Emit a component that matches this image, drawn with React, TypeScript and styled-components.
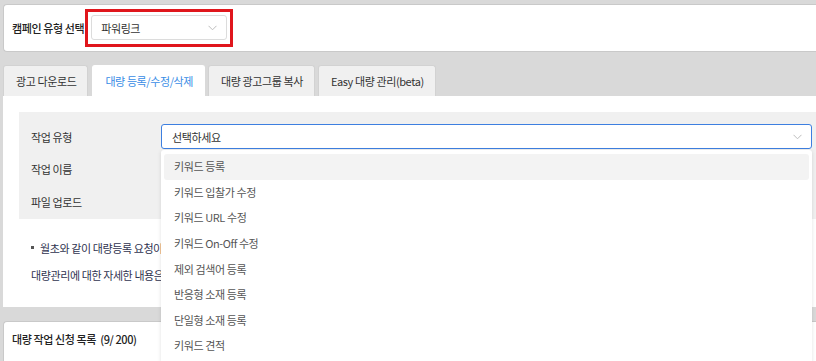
import React, { useState } from 'react'
import styled, { createGlobalStyle } from 'styled-components'

const GlobalStyle = createGlobalStyle`
  body {
    margin: 0;
    background: #d9d9d9;
    font-family: "Noto Sans CJK KR", "Noto Sans", sans-serif;
    color: #333;
    font-size: 11px;
    letter-spacing: -0.4px;
  }
  * { box-sizing: border-box; }
`

const JOB_TYPES = [
	'키워드 등록',
	'키워드 입찰가 수정',
	'키워드 URL 수정',
	'키워드 On-Off 수정',
	'제외 검색어 등록',
	'반응형 소재 등록',
	'단일형 소재 등록',
	'키워드 견적',
]

const TABS = ['광고 다운로드', '대량 등록/수정/삭제', '대량 광고그룹 복사', 'Easy 대량 관리(beta)']

const Page = styled.div`
  padding: 4px 0 0 3px;
  height: 361px;
  overflow: hidden;
`

const Card = styled.div`
  background: #fff;
  border: 1px solid #c9c9c9;
  border-right: none;
  border-radius: 4px 0 0 4px;
`

const TopCard = styled(Card)`
  height: 48px;
  display: flex;
  align-items: center;
  padding-left: 8px;
  gap: 1px;
`

const Label = styled.span`
  font-weight: 500;
  color: #222;
`

const Highlight = styled.div`
  border: 3px solid #e0161c;
  padding: 3px 3px;
  width: 148px;
  height: 38px;
`

const SelectBox = styled.div<{ $focused?: boolean }>`
  height: 25px;
  border: 1px solid ${p => (p.$focused ? '#3d7fe0' : '#dcdcdc')};
  border-radius: 3px;
  background: #fff;
  display: flex;
  align-items: center;
  justify-content: space-between;
  padding: 0 9px 0 ${p => (p.$focused ? 10 : 9)}px;
  color: #333;
`

const Chevron = () => (
	<svg width="9" height="6" viewBox="0 0 9 6">
		<path d="M0.5 0.8 L4.5 4.8 L8.5 0.8" fill="none" stroke="#bdbdbd" strokeWidth="1" />
	</svg>
)

const TabBar = styled.div`
  display: flex;
  gap: 3px;
  margin-top: 13px;
  height: 31px;
`

const Tab = styled.div<{ $active?: boolean }>`
  padding: 0 11px 0 12px;
  margin-left: ${p => (p.$active ? 1 : 0)}px;
  display: flex;
  align-items: center;
  border-radius: 3px 3px 0 0;
  border: 1px solid ${p => (p.$active ? '#fff' : '#d2d2d2')};
  border-bottom: none;
  background: ${p => (p.$active ? '#fff' : '#f0f0f0')};
  color: ${p => (p.$active ? '#3a8de6' : '#333')};
`

const Panel = styled.div`
  background: #fff;
  padding: 16px 0 0 16px;
  height: 211px;
`

const Form = styled.div`
  background: #f0f0f0;
  padding: 12px 4px 0 12px;
  height: 107px;
`

const Row = styled.div`
  display: flex;
  align-items: center;
  height: 33px;
  &:first-child { height: 25px; margin-bottom: 3px; }
`

const RowLabel = styled.div`
  width: 130px;
  color: #333;
`

const Field = styled.div`
  flex: 1;
  position: relative;
`

const Menu = styled.ul`
  position: absolute;
  left: 0;
  right: 0;
  top: 26px;
  margin: 0;
  padding: 4px 3px;
  list-style: none;
  background: #fff;
  box-shadow: 0 1px 4px rgba(0, 0, 0, 0.12);
  border-radius: 3px;
  z-index: 10;
`

const MenuItem = styled.li<{ $hover?: boolean }>`
  height: 25.6px;
  display: flex;
  align-items: center;
  padding: 0 0 1px 10px;
  border-radius: 3px;
  color: #555;
  background: ${p => (p.$hover ? '#f3f3f3' : 'transparent')};
`

const Notes = styled.div`
  padding: 15px 0 0 9px;
  color: #2f3350;
`

const Note = styled.div<{ $bullet?: boolean }>`
  height: 27px;
  display: flex;
  align-items: center;
  gap: 6px;
  padding-left: 3px;
  &::before {
    content: '';
    display: ${p => (p.$bullet ? 'block' : 'none')};
    width: 3px;
    height: 3px;
    background: #555;
  }
`

const ListCard = styled(Card)`
  margin-top: 14px;
  height: 60px;
  padding: 9px 0 0 8px;
`

const ListTitle = styled.div`
  font-weight: 500;
  color: #222;
`

const App: React.FC = () => {
	const [active] = useState(1)
	return (
		<Page>
			<GlobalStyle />
			<TopCard>
				<Label>캠페인 유형 선택</Label>
				<Highlight>
					<SelectBox>
						파워링크
						<Chevron />
					</SelectBox>
				</Highlight>
			</TopCard>
			<TabBar>
				{TABS.map((t, i) => (
					<Tab key={t} $active={i === active}>{t}</Tab>
				))}
			</TabBar>
			<Panel>
				<Form>
					<Row>
						<RowLabel>작업 유형</RowLabel>
						<Field>
							<SelectBox $focused>
								선택하세요
								<Chevron />
							</SelectBox>
							<Menu>
								{JOB_TYPES.map((j, i) => (
									<MenuItem key={j} $hover={i === 0}>{j}</MenuItem>
								))}
							</Menu>
						</Field>
					</Row>
					<Row>
						<RowLabel>작업 이름</RowLabel>
					</Row>
					<Row>
						<RowLabel>파일 업로드</RowLabel>
					</Row>
				</Form>
				<Notes>
					<Note $bullet>월초와 같이 대량등록 요청이</Note>
					<Note>대량관리에 대한 자세한 내용은</Note>
				</Notes>
			</Panel>
			<ListCard>
				<ListTitle>대량 작업 신청 목록 &nbsp;(9/ 200)</ListTitle>
			</ListCard>
		</Page>
	)
}

export default App
